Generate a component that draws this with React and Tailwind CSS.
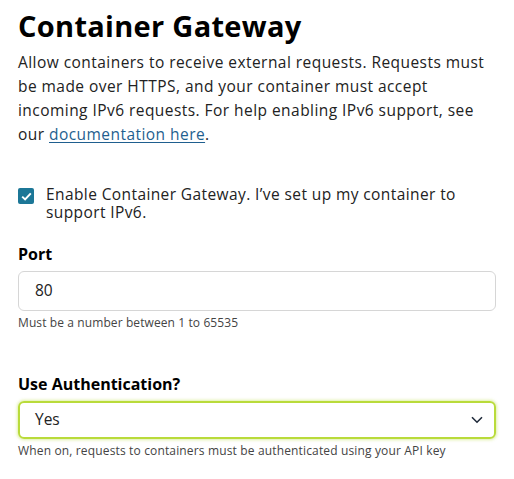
export default function App() {
    return (
        <div className="w-[514px] h-[479px] bg-white px-[18px] pt-[6px] text-[#1a1a1a] font-['Open_Sans',sans-serif]">
            {/* Heading + intro */}
            <h1 className="text-[29px] font-bold leading-[40px] text-black tracking-[0.3px]">Container Gateway</h1>
            <p className="mt-[4px] text-[15.5px] leading-[24px] text-[#222] tracking-[0.45px] whitespace-nowrap">
                Allow containers to receive external requests. Requests must<br />
                be made over HTTPS, and your container must accept<br />
                incoming IPv6 requests. For help enabling IPv6 support, see<br />
                our <a href="#" className="text-[#1f5f8f] underline underline-offset-2">documentation here</a>.
            </p>

            {/* Checkbox */}
            <label className="mt-[37px] flex items-start gap-[12px]">
                <span className="mt-[5px] w-[16px] h-[16px] rounded-[2px] bg-[#1c7797] flex items-center justify-center shrink-0">
                    <svg width="11" height="9" viewBox="0 0 11 9" fill="none">
                        <path d="M1.2 4.6 L4.1 7.4 L9.8 1.4" stroke="white" strokeWidth="2" />
                    </svg>
                </span>
                <span className="text-[15.5px] leading-[18px] text-[#222] pt-[2px] tracking-[0.4px] whitespace-nowrap">
                    Enable Container Gateway. I’ve set up my container to<br />
                    support IPv6.
                </span>
            </label>

            {/* Port */}
            <div className="mt-[23px] text-[16px] font-bold leading-[20px] text-black">Port</div>
            <div className="mt-[7px] h-[40px] w-[478px] rounded-[6px] border border-[#d6d6d6] flex items-center px-[16px] text-[15.5px] text-[#222]">
                80
            </div>
            <div className="mt-[5px] text-[12px] leading-[14px] text-[#444] tracking-[0.1px]">Must be a number between 1 to 65535</div>

            {/* Authentication */}
            <div className="mt-[44px] text-[16px] font-bold leading-[20px] text-black">Use Authentication?</div>
            <div className="mt-[7px] h-[38px] w-[478px] rounded-[6px] border-2 border-[#b9db3a] shadow-[0_0_3px_1px_rgba(185,219,58,0.45)] flex items-center justify-between pl-[15px] pr-[11px] text-[15.5px] text-[#222]">
                <span>Yes</span>
                <svg width="12" height="8" viewBox="0 0 12 8" fill="none">
                    <path d="M1 1.2 L6 6.2 L11 1.2" stroke="#1f2a3a" strokeWidth="1.6" />
                </svg>
            </div>
            <div className="mt-[5px] text-[12px] leading-[14px] text-[#444] tracking-[0.15px]">
                When on, requests to containers must be authenticated using your API key
            </div>
        </div>
    );
}
